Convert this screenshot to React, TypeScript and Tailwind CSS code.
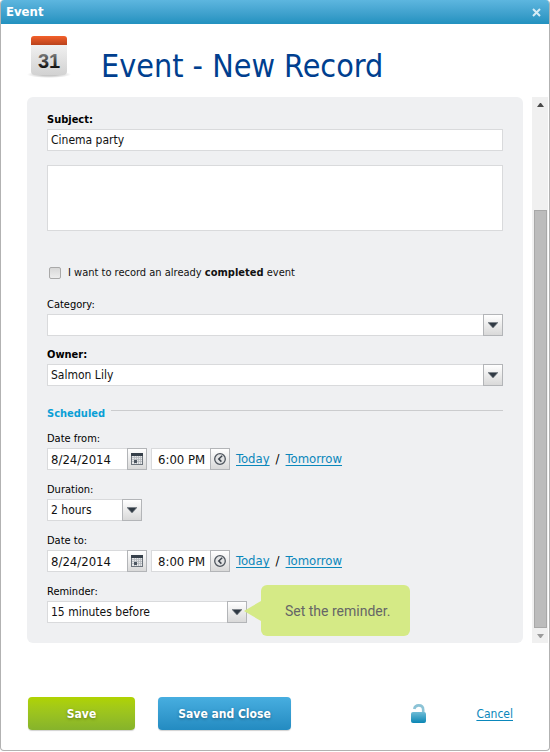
import { useState } from "react";
import type { ReactNode } from "react";
import clsx from "clsx";

const CATEGORIES = ["", "Meeting", "Social"];
const OWNERS = ["Salmon Lily"];
const DURATIONS = ["1 hour", "2 hours", "3 hours"];
const REMINDERS = ["5 minutes before", "15 minutes before", "1 hour before"];

const BOX = "block h-[22px] border border-[#d9dadc] bg-white text-[#111]";
const ADDON =
    "flex h-[22px] w-5 shrink-0 items-center justify-center border border-[#b3b5b8] bg-linear-to-b from-white to-[#d9d9d9]";
const LINK = "text-[#0a87bb] underline underline-offset-2";

export default function App() {
    return (
        <main className="overflow-hidden rounded-sm border-x border-b border-[#b2b2b2] bg-white font-['Tahoma','DejaVu_Sans_Condensed','DejaVu_Sans',sans-serif] text-black">
            <TitleBar />
            <header className="flex h-[73px] items-start pt-3 pl-[26px]">
                <CalendarLogo />
                <h1 className="ml-7 pt-2.5 text-[32px] leading-10 text-[#003f8f]">
                    Event - New Record
                </h1>
            </header>
            <div className="flex gap-[9px] pr-px pl-[26px]">
                <EventForm />
                <ScrollTrack />
            </div>
            <Footer />
        </main>
    );
}

function TitleBar() {
    return (
        <div className="-mx-px flex h-6 items-center justify-between bg-linear-to-b from-[#5db6df] to-[#2191bf] pr-[9px] pl-1.5">
            <span className="text-[13px] font-bold text-white">Event</span>
            <button type="button" aria-label="Close" className="text-[#d5ecf6]">
                <svg width="9" height="9" viewBox="0 0 9 9">
                    <path
                        d="M1 1l7 7M8 1L1 8"
                        stroke="currentColor"
                        strokeWidth="2"
                    />
                </svg>
            </button>
        </div>
    );
}

function EventForm() {
    const [completed, setCompleted] = useState(false);

    return (
        <form
            id="event-form"
            className="min-w-0 flex-1 rounded-md bg-[#eff0f2] px-5 pt-3.5 pb-5"
            onSubmit={(e) => e.preventDefault()}
        >
            <Field id="subject" label="Subject:" bold>
                <input
                    id="subject"
                    defaultValue="Cinema party"
                    className={clsx(BOX, "w-full px-[3px] text-xs")}
                />
            </Field>
            <textarea
                aria-label="Description"
                className="mt-3.5 block h-[66px] w-full resize-none border border-[#d9dadc] bg-white p-1 text-xs"
            />
            <label className="mt-[34px] flex h-4 items-center gap-[7px] pl-0.5 text-[11px] text-[#111]">
                <input
                    type="checkbox"
                    checked={completed}
                    onChange={(e) => setCompleted(e.target.checked)}
                    className="size-3 appearance-none rounded-xs border border-[#a9a9a9] bg-linear-to-b from-[#d8d8d8] to-[#ededed] checked:from-[#5db6df] checked:to-[#2191bf]"
                />
                <span>
                    I want to record an already <b>completed</b> event
                </span>
            </label>
            <Field id="category" label="Category:" className="mt-[15px]">
                <Dropdown id="category" options={CATEGORIES} value="" />
            </Field>
            <Field id="owner" label="Owner:" bold className="mt-2.5">
                <Dropdown id="owner" options={OWNERS} value="Salmon Lily" />
            </Field>
            <div className="mt-5 flex h-4 gap-1.5">
                <h2 className="text-[11px] leading-4 font-bold text-[#0a9fd6]">
                    Scheduled
                </h2>
                <div className="mt-1 h-px flex-1 bg-[#cbccce]" />
            </div>
            <Field id="date-from" label="Date from:" className="mt-2">
                <DateTime id="date-from" date="8/24/2014" time="6:00 PM" />
            </Field>
            <Field id="duration" label="Duration:" className="mt-[11px]">
                <div className="w-[95px]">
                    <Dropdown id="duration" options={DURATIONS} value="2 hours" />
                </div>
            </Field>
            <Field id="date-to" label="Date to:" className="mt-[11px]">
                <DateTime id="date-to" date="8/24/2014" time="8:00 PM" />
            </Field>
            <Field id="reminder" label="Reminder:" className="mt-[11px]">
                <div className="relative w-[200px]">
                    <Dropdown
                        id="reminder"
                        options={REMINDERS}
                        value="15 minutes before"
                    />
                    <Hint>Set the reminder.</Hint>
                </div>
            </Field>
        </form>
    );
}

function Field({
    id,
    label,
    bold,
    className,
    children,
}: {
    id: string;
    label: string;
    bold?: boolean;
    className?: string;
    children: ReactNode;
}) {
    return (
        <div className={className}>
            <label
                htmlFor={id}
                className={clsx(
                    "block text-[11px] leading-[18px]",
                    bold && "font-bold",
                )}
            >
                {label}
            </label>
            {children}
        </div>
    );
}

function Dropdown({
    id,
    options,
    value,
}: {
    id: string;
    options: string[];
    value: string;
}) {
    return (
        <div className="relative">
            <select
                id={id}
                defaultValue={value}
                className={clsx(BOX, "w-full appearance-none pr-5 pl-[3px] text-xs")}
            >
                {options.map((option) => (
                    <option key={option}>{option}</option>
                ))}
            </select>
            <span
                className={clsx(ADDON, "pointer-events-none absolute top-0 right-0")}
            >
                <svg width="10" height="6" viewBox="0 0 10 6">
                    <path d="M0 0h10v1L5.5 6h-1L0 1z" fill="#7f858b" />
                    <path d="M1 1h8L5 5.4z" fill="#2f3943" />
                </svg>
            </span>
        </div>
    );
}

function DateTime({
    id,
    date,
    time,
}: {
    id: string;
    date: string;
    time: string;
}) {
    return (
        <div className="flex items-center text-[13px]">
            <input
                id={id}
                defaultValue={date}
                className={clsx(BOX, "w-20 border-r-0 pl-[3px]")}
            />
            <button type="button" aria-label="Pick a date" className={ADDON}>
                <CalendarIcon />
            </button>
            <input
                aria-label="Time"
                defaultValue={time}
                className={clsx(BOX, "ml-1 w-[59px] border-r-0 pl-1.5")}
            />
            <button type="button" aria-label="Pick a time" className={ADDON}>
                <ClockIcon />
            </button>
            <span className="ml-1.5 flex gap-1.5">
                <a href="#today" className={LINK}>
                    Today
                </a>
                <span>/</span>
                <a href="#tomorrow" className={LINK}>
                    Tomorrow
                </a>
            </span>
        </div>
    );
}

function Hint({ children }: { children: ReactNode }) {
    return (
        <div
            role="tooltip"
            className="absolute -top-4 left-full -ml-[3px] flex items-center"
        >
            <svg width="17" height="20" viewBox="0 0 17 20">
                <path d="M0 10L17 0v20z" fill="#d5ea86" />
            </svg>
            <span className="flex h-[51px] w-[149px] items-center rounded-md bg-[#d5ea86] pl-6 font-['Roboto',sans-serif] text-sm whitespace-nowrap text-[#666]">
                {children}
            </span>
        </div>
    );
}

function ScrollTrack() {
    return (
        <div className="flex w-4 flex-col items-center bg-[#f0f0f0]">
            <button
                type="button"
                aria-label="Scroll up"
                className="flex h-4 w-full items-center justify-center"
            >
                <svg width="7" height="4" viewBox="0 0 7 4">
                    <path d="M0 4L3 0h1l3 4z" fill="#4a4a4a" />
                </svg>
            </button>
            <div className="mt-[97px] w-[13px] flex-1 border border-[#a8a8a8] bg-[#bcbcbc]" />
            <button
                type="button"
                aria-label="Scroll down"
                className="flex h-[15px] w-full items-center justify-center"
            >
                <svg width="7" height="4" viewBox="0 0 7 4">
                    <path d="M0 0h7L4 4H3z" fill="#9b9b9b" />
                </svg>
            </button>
        </div>
    );
}

function Footer() {
    return (
        <footer className="flex items-center pt-[54px] pr-9 pb-5 pl-[27px] text-xs">
            <button
                type="submit"
                form="event-form"
                className="h-[33px] w-[107px] rounded-sm bg-linear-to-b from-[#b0d300] to-[#86b32b] font-bold text-white shadow-[0_1px_1px_rgba(0,0,0,0.18)] text-shadow-[0_1px_3px_rgba(0,0,0,0.35)]"
            >
                Save
            </button>
            <button
                type="submit"
                form="event-form"
                className="ml-[23px] h-[33px] w-[133px] rounded-sm bg-linear-to-b from-[#47aee0] to-[#238bc1] font-bold text-white shadow-[0_1px_1px_rgba(0,0,0,0.18)] text-shadow-[0_1px_3px_rgba(0,0,0,0.35)]"
            >
                Save and Close
            </button>
            <button type="button" aria-label="Unlocked" className="mr-[50px] ml-auto">
                <LockIcon />
            </button>
            <a href="#cancel" className={LINK}>
                Cancel
            </a>
        </footer>
    );
}

function CalendarLogo() {
    return (
        <svg width="46" height="44" viewBox="0 0 46 44" aria-hidden="true">
            <defs>
                <linearGradient id="logo-top" x1="0" y1="0" x2="0" y2="1">
                    <stop offset="0" stopColor="#f4602a" />
                    <stop offset="1" stopColor="#b9421c" />
                </linearGradient>
                <linearGradient id="logo-page" x1="0" y1="0" x2="0" y2="1">
                    <stop offset="0" stopColor="#f0f0f0" />
                    <stop offset="1" stopColor="#d2d2d2" />
                </linearGradient>
                <linearGradient id="logo-day" x1="0" y1="0" x2="0" y2="1">
                    <stop offset="0.2" stopColor="#777" />
                    <stop offset="0.8" stopColor="#111" />
                </linearGradient>
                <radialGradient id="logo-shadow">
                    <stop offset="0.4" stopColor="#000" stopOpacity="0.22" />
                    <stop offset="1" stopColor="#000" stopOpacity="0" />
                </radialGradient>
            </defs>
            <ellipse cx="22" cy="38.5" rx="22" ry="3.5" fill="url(#logo-shadow)" />
            <path d="M4 9h36v26a4 4 0 0 1-4 4H8a4 4 0 0 1-4-4z" fill="url(#logo-page)" />
            <path d="M4 9V3a3 3 0 0 1 3-3h30a3 3 0 0 1 3 3v6z" fill="url(#logo-top)" />
            <text
                x="22"
                y="32"
                textAnchor="middle"
                fill="url(#logo-day)"
                className="font-['Liberation_Sans',sans-serif] text-[20px] font-bold"
            >
                31
            </text>
        </svg>
    );
}

function CalendarIcon() {
    return (
        <svg width="12" height="12" viewBox="0 0 12 12">
            <path d="M0 0h12v12H0z" fill="#6d747c" />
            <path d="M0 0h12v3H0z" fill="#36404a" />
            <path d="M1 3h10v8H1z" fill="#e6e7e9" />
            <path
                d="M3.5 3v8M5.5 3v8M7.5 3v8M9.5 3v8M1 4.5h10M1 6.5h10M1 8.5h10"
                stroke="#b3b7bb"
                strokeWidth="0.8"
            />
            <path d="M3 7h3v3H3z" fill="#4d5660" />
        </svg>
    );
}

function ClockIcon() {
    return (
        <svg width="12" height="12" viewBox="0 0 12 12" fill="none">
            <circle cx="6" cy="6" r="5.3" fill="#e2e3e4" stroke="#50575f" strokeWidth="1.3" />
            <path d="M8.2 2.8L4.8 6l2.6 2.6" stroke="#3d454e" strokeWidth="1.5" />
        </svg>
    );
}

function LockIcon() {
    return (
        <svg width="15" height="19" viewBox="0 0 15 19" fill="none">
            <defs>
                <linearGradient id="lock-body" x1="0" y1="0" x2="0" y2="1">
                    <stop offset="0" stopColor="#6fbcd6" />
                    <stop offset="1" stopColor="#0a86b4" />
                </linearGradient>
            </defs>
            <path
                d="M3.2 5C3.8 2.6 5.4 1.4 7.6 1.4c2.8 0 4.6 1.8 4.6 4.4V9"
                stroke="#8cc3d6"
                strokeWidth="2.6"
            />
            <rect y="8" width="15" height="11" rx="2" fill="url(#lock-body)" />
        </svg>
    );
}
